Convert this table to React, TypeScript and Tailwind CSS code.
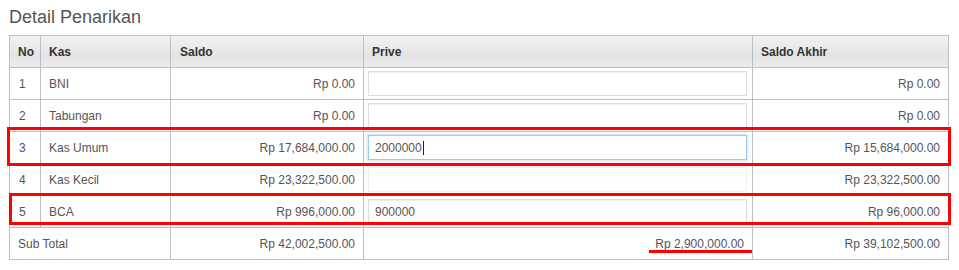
const rows = [
  { no: 1, kas: "BNI", saldo: "Rp 0.00", prive: "", akhir: "Rp 0.00" },
  { no: 2, kas: "Tabungan", saldo: "Rp 0.00", prive: "", akhir: "Rp 0.00" },
  { no: 3, kas: "Kas Umum", saldo: "Rp 17,684,000.00", prive: "2000000", akhir: "Rp 15,684,000.00", focus: true },
  { no: 4, kas: "Kas Kecil", saldo: "Rp 23,322,500.00", prive: "", akhir: "Rp 23,322,500.00", faint: true },
  { no: 5, kas: "BCA", saldo: "Rp 996,000.00", prive: "900000", akhir: "Rp 96,000.00" },
];

const cell = "border border-[#b9c0c7] h-[32px] px-[8px] py-0 align-middle";

export default function App() {
  return (
    <div className="min-h-[270px] w-[959px] bg-white font-['Liberation_Sans',Arial,sans-serif] text-[12px] text-[#555]">
      {/* Judul */}
      <h3 className="px-[9px] pt-[6px] pb-[7px] text-[18px] leading-[22px] font-normal text-[#555]">
        Detail Penarikan
      </h3>

      <div className="relative ml-[9px] w-[939px]">
        <table className="w-full table-fixed border-collapse">
          <colgroup>
            <col className="w-[31px]" />
            <col className="w-[130px]" />
            <col className="w-[193px]" />
            <col className="w-[389px]" />
            <col className="w-[196px]" />
          </colgroup>
          <thead>
            <tr className="bg-[linear-gradient(#f2f2f2,#e4e4e4_60%,#ececec)] text-left font-bold text-[#333]">
              <th className={cell + " px-[6px]"}>No</th>
              <th className={cell}>Kas</th>
              <th className={cell + " pl-[9px]"}>Saldo</th>
              <th className={cell}>Prive</th>
              <th className={cell}>Saldo Akhir</th>
            </tr>
          </thead>
          <tbody>
            {rows.map((r) => (
              <tr key={r.no}>
                <td className={cell + " px-[9px]"}>{r.no}</td>
                <td className={cell}>{r.kas}</td>
                <td className={cell + " text-right"}>{r.saldo}</td>
                <td className={cell + " pr-[5px] pl-[4px]"}>
                  <div
                    className={
                      "flex h-[25px] w-full items-center px-[6px] " +
                      (r.focus
                        ? "border border-[#9ccbe8] shadow-[0_0_3px_1px_#cfe6f5]"
                        : r.faint
                          ? "border border-[#efefef]"
                          : "border border-[#dedede] shadow-[inset_0_1px_1px_#eee]")
                    }
                  >
                    {r.prive}
                    {r.focus && <span className="ml-[1px] inline-block h-[14px] w-px bg-[#222]" />}
                  </div>
                </td>
                <td className={cell + " text-right"}>{r.akhir}</td>
              </tr>
            ))}
            <tr>
              <td colSpan={2} className={cell + " px-[7px]"}>
                Sub Total
              </td>
              <td className={cell + " text-right"}>Rp 42,002,500.00</td>
              <td className={cell + " text-right"}>Rp 2,900,000.00</td>
              <td className={cell + " text-right"}>Rp 39,102,500.00</td>
            </tr>
          </tbody>
        </table>

        {/* Penanda merah */}
        <div className="absolute top-[92px] left-[-2px] h-[39px] w-[944px] border-[3px] border-[#f00]" />
        <div className="absolute top-[158px] left-0 h-[32px] w-[942px] border-[3px] border-[#f00]" />
        <div className="absolute top-[215px] left-[640px] h-[3px] w-[103px] bg-[#f00]" />
      </div>
    </div>
  );
}
